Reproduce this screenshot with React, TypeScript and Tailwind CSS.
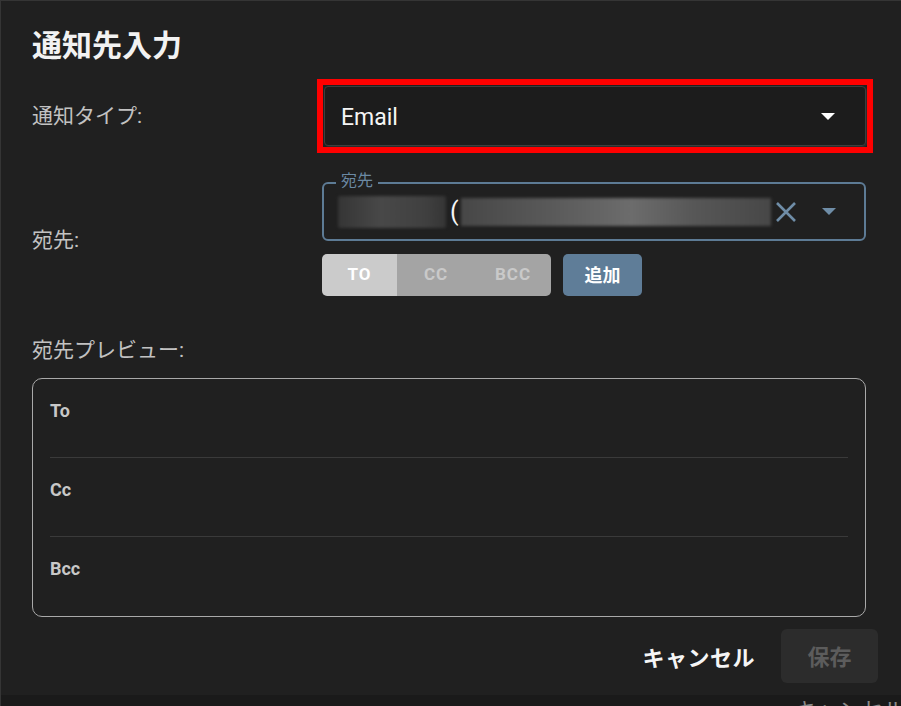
import React from "react";

const font = "font-['Roboto','Noto_Sans_CJK_JP',sans-serif]";

function Caret({ className }: { className?: string }) {
  return (
    <svg width="14" height="7" viewBox="0 0 14 7" className={className}>
      <path d="M0 0 L14 0 L7 7 Z" fill="currentColor" />
    </svg>
  );
}

export default function App() {
  return (
    <div
      className={`w-[901px] h-[706px] bg-[#202020] flex flex-col overflow-hidden border-t border-l border-[#353535] ${font}`}
    >
      <div className="flex-1 flex flex-col pl-[31px] pr-[35px]">
        <h1 className="mt-[25px] text-[30px] font-bold leading-[40px] text-[#f2f2f2]">
          通知先入力
        </h1>

        {/* Row 1 */}
        <div className="mt-[20px] grid grid-cols-[290px_1fr] items-center">
          <div className="text-[21px] leading-[30px] text-[#c2c2c2]">通知タイプ:</div>
          <div className="relative ml-[2px]">
            <div className="h-[60px] rounded-[4px] border border-[#3e3e3e] bg-[#1c1c1c] shadow-[1px_1px_0_#2c2c2c] flex items-center justify-between pl-[16px] pr-[30px]">
              <span className="pt-[4px] text-[23px] text-[#f5f5f5]">Email</span>
              <Caret className="text-white" />
            </div>
            <div className="pointer-events-none absolute -inset-[7px] border-[6px] border-[#ff0000]" />
          </div>
        </div>

        {/* Row 2 */}
        <div className="mt-[36px] grid grid-cols-[290px_1fr] items-center">
          <div className="text-[21px] leading-[30px] text-[#c2c2c2] pt-[2px]">宛先:</div>
          <div className="flex flex-col">
            <div className="relative h-[59px] rounded-[6px] border-2 border-[#5d7b95] flex items-center pl-[14px] pr-[28px]">
              <span className="absolute -top-[13px] left-[12px] px-[5px] bg-[#202020] text-[16px] leading-[20px] text-[#6b89a3]">
                宛先
              </span>
              <div className="h-[32px] w-[108px] rounded-[2px] bg-[linear-gradient(90deg,#353535,#484848_40%,#404040_80%,#353535)] blur-[1.5px]" />
              <span className="ml-[4px] text-[25px] leading-[30px] text-[#f5f5f5]">(</span>
              <div className="ml-[2px] h-[28px] w-[310px] bg-[linear-gradient(90deg,#474747,#5a5a5a_30%,#6c6c6c_55%,#575757_75%,#474747)] blur-[1.5px]" />
              <div className="flex-1" />
              <svg width="22" height="20" viewBox="0 0 22 20" className="text-[#6f8da7]">
                <path d="M2 1 L20 19 M20 1 L2 19" stroke="currentColor" strokeWidth="2.6" />
              </svg>
              <Caret className="ml-[25px] text-[#6f8da7]" />
            </div>
            <div className="mt-[13px] flex items-center">
              <div className="flex h-[42px] w-[229px] rounded-[5px] overflow-hidden text-[17px] font-bold tracking-[1px]">
                <div className="w-[75px] bg-[#cbcbcb] text-white flex items-center justify-center">TO</div>
                <div className="w-[78px] bg-[#a4a4a4] text-[#c9c9c9] flex items-center justify-center">CC</div>
                <div className="flex-1 bg-[#a4a4a4] text-[#c9c9c9] flex items-center justify-center">BCC</div>
              </div>
              <div className="ml-[12px] h-[42px] w-[79px] rounded-[5px] bg-[#5f7d98] text-white text-[18px] font-bold flex items-center justify-center">
                追加
              </div>
            </div>
          </div>
        </div>

        <div className="mt-[39px] text-[21px] leading-[30px] text-[#c2c2c2]">宛先プレビュー:</div>

        <div className="mt-[13px] h-[239px] rounded-[10px] border-[1.5px] border-[#a9a9a9] px-[17px] flex flex-col">
          {["To", "Cc", "Bcc"].map((t, i) => (
            <div
              key={t}
              className={`h-[79px] pt-[20px] ${i < 2 ? "border-b border-[#3a3a3a]" : ""}`}
            >
              <span className="text-[18px] leading-[24px] font-bold text-[#c8c8c8]">{t}</span>
            </div>
          ))}
        </div>
      </div>

      {/* Footer */}
      <div className="flex items-center justify-end pr-[23px] pb-[12px] gap-[26px]">
        <span className="pt-[4px] text-[22px] font-bold text-[#f5f5f5] tracking-[0.5px]">キャンセル</span>
        <div className="h-[54px] w-[97px] rounded-[6px] bg-[#2c2c2c] text-[#5c5c5c] text-[22px] font-bold flex items-center justify-center pt-[3px]">
          保存
        </div>
      </div>

      <div className="h-[11px] shrink-0 bg-[#1a1a1a] overflow-hidden flex justify-end">
        <span className="mt-[1px] text-[22px] leading-[30px] text-[#8a8a8a] whitespace-nowrap w-[106px] overflow-hidden">
          キャンセル
        </span>
      </div>
    </div>
  );
}
